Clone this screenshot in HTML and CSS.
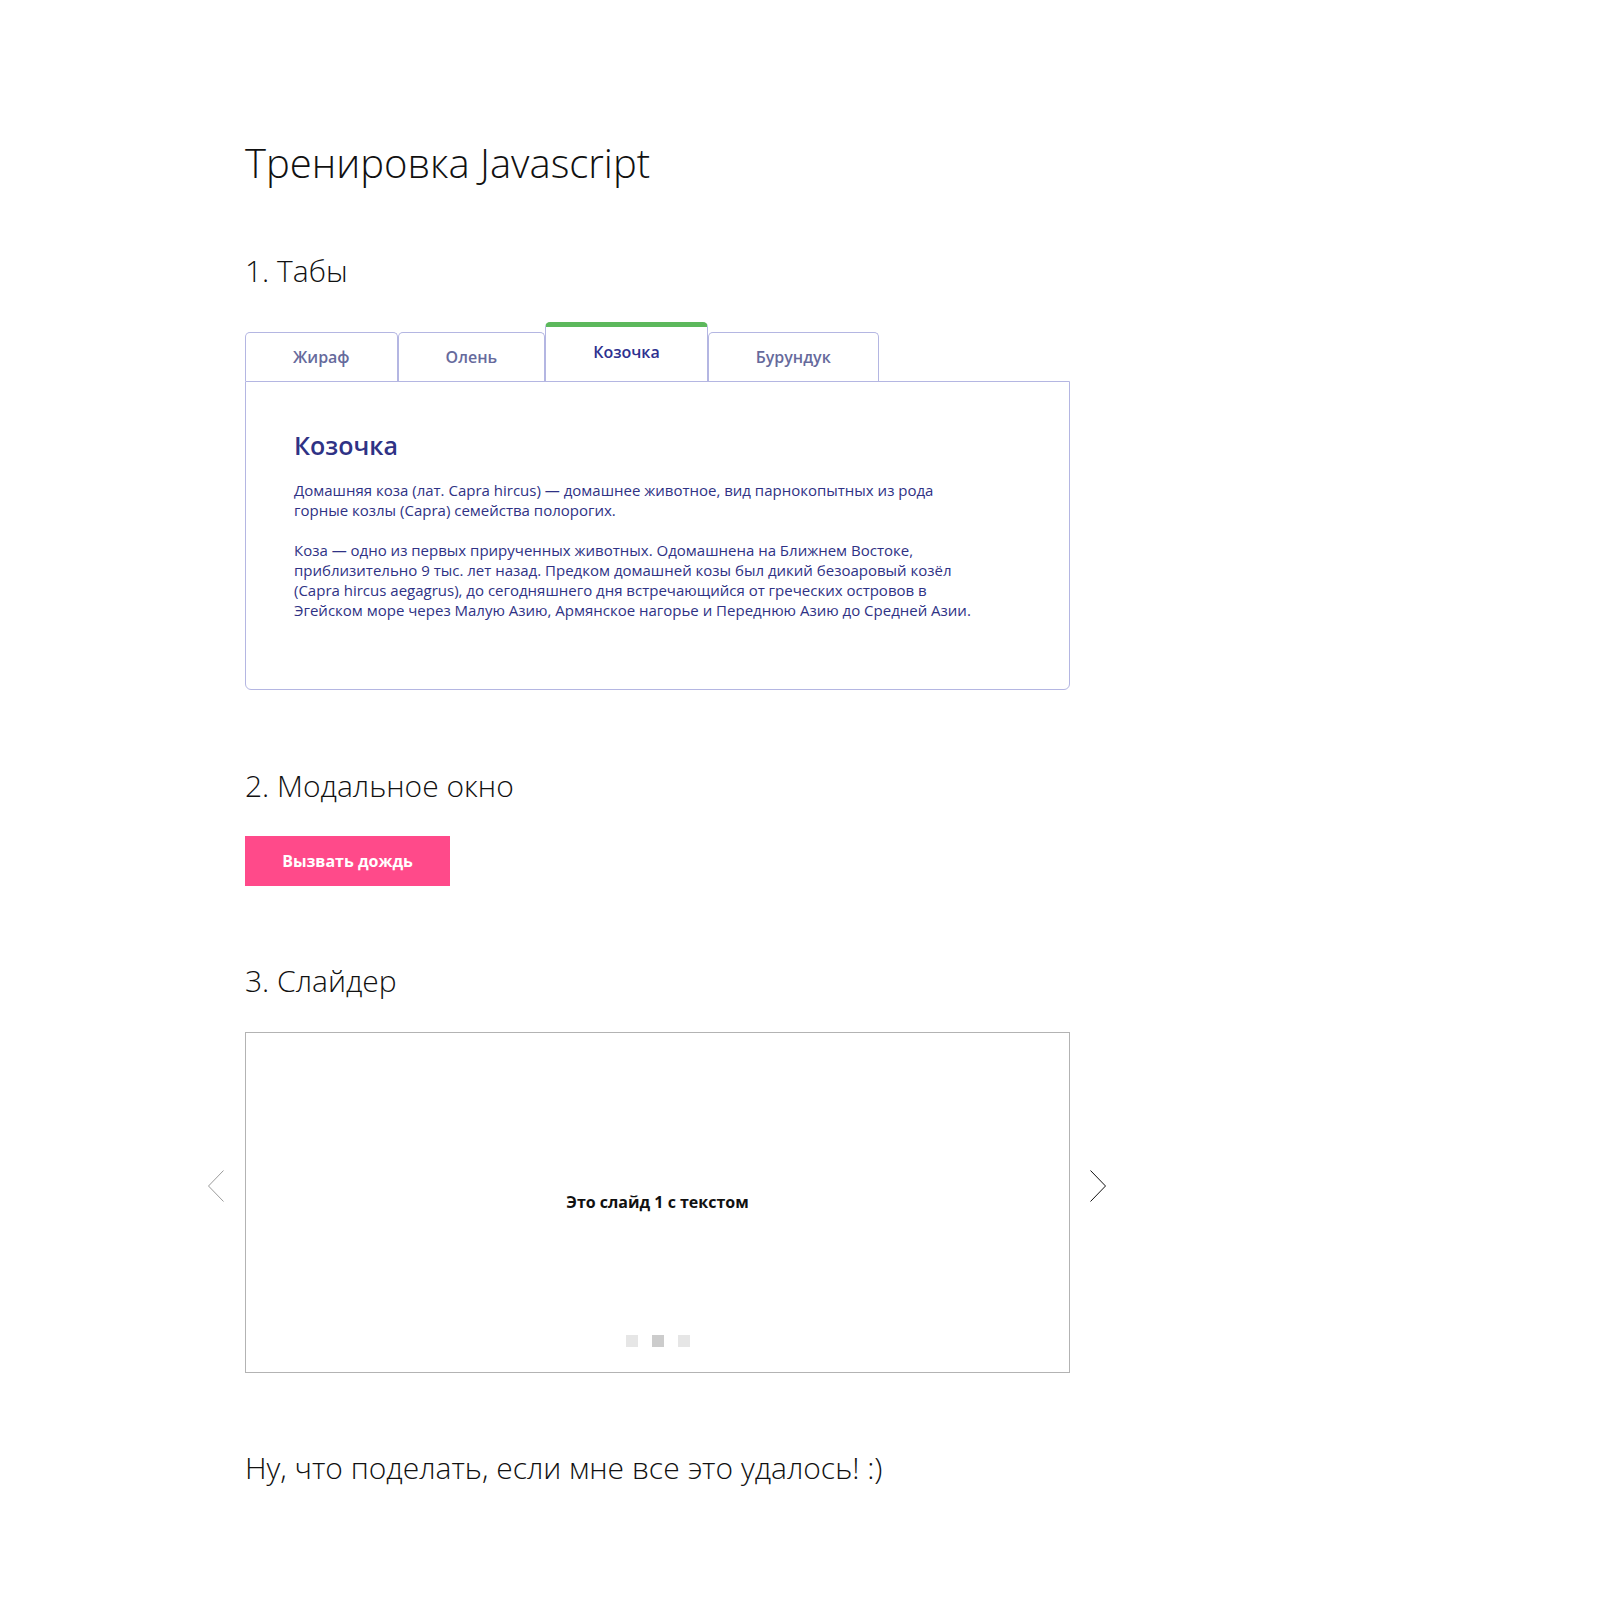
FILE: index.html
```html
<!DOCTYPE html>
<html lang="ru">
<head>
<meta charset="utf-8">
<title>Тренировка Javascript</title>
<link rel="stylesheet" href="styles.css">
</head>
<body>
<div class="page">
  <h1 class="title">Тренировка Javascript</h1>

  <section class="section section-tabs">
    <h2 class="section-title">1. Табы</h2>
    <div class="tabs">
      <div class="tab-list">
        <div class="tab">Жираф</div>
        <div class="tab">Олень</div>
        <div class="tab tab-active">Козочка</div>
        <div class="tab">Бурундук</div>
      </div>
      <div class="tab-panel">
        <h3 class="panel-title">Козочка</h3>
        <p class="panel-text">Домашняя коза (лат. Capra hircus) — домашнее животное, вид парнокопытных из рода горные козлы (Capra) семейства полорогих.</p>
        <p class="panel-text">Коза — одно из первых прирученных животных. Одомашнена на Ближнем Востоке, приблизительно 9 тыс. лет назад. Предком домашней козы был дикий безоаровый козёл (Capra hircus aegagrus), до сегодняшнего дня встречающийся от греческих островов в Эгейском море через Малую Азию, Армянское нагорье и Переднюю Азию до Средней Азии.</p>
      </div>
    </div>
  </section>

  <section class="section section-modal">
    <h2 class="section-title">2. Модальное окно</h2>
    <button class="btn-rain" type="button">Вызвать дождь</button>
  </section>

  <section class="section section-slider">
    <h2 class="section-title">3. Слайдер</h2>
    <div class="slider">
      <svg class="arrow arrow-prev" width="16" height="32" viewBox="0 0 16 32"><polyline points="15.5,0.5 0.5,16 15.5,31.5" fill="none" stroke="#9a9a9a" stroke-width="1"/></svg>
      <div class="slide">Это слайд 1 с текстом</div>
      <div class="dots">
        <span class="dot"></span>
        <span class="dot dot-active"></span>
        <span class="dot"></span>
      </div>
      <svg class="arrow arrow-next" width="16" height="32" viewBox="0 0 16 32"><polyline points="0.5,0.5 15.5,16 0.5,31.5" fill="none" stroke="#111" stroke-width="1"/></svg>
    </div>
  </section>

  <p class="final">Ну, что поделать, если мне все это удалось! :)</p>
</div>
</body>
</html>
```

FILE: styles.css
```css
html, body {
  margin: 0;
  padding: 0;
  background: #fff;
}

body {
  font-family: "Open Sans", "Noto Sans", sans-serif;
  color: #111;
}

.page {
  width: 825px;
  margin-left: 245px;
  padding: 136px 0 120px;
}

.title {
  margin: 0;
  font-size: 40px;
  line-height: 54px;
  font-weight: 300;
  color: #111;
}

.section-title {
  margin: 0;
  font-size: 30px;
  line-height: 41px;
  font-weight: 300;
  color: #111;
}

.section-tabs {
  margin-top: 60px;
}

.tabs {
  margin-top: 31px;
}

.tab-list {
  display: flex;
  align-items: flex-end;
}

.tab {
  box-sizing: border-box;
  height: 49px;
  padding: 0 47px;
  display: flex;
  align-items: center;
  justify-content: center;
  border: 1px solid #b4b6e2;
  border-bottom: none;
  border-radius: 5px 5px 0 0;
  background: #fff;
  font-size: 16px;
  font-weight: 600;
  color: #666a9c;
}

.tab-active {
  height: 59px;
  border-top: 5px solid #5cb85c;
  color: #2e3190;
  padding-bottom: 4px;
}

.tab-panel {
  border: 1px solid #b4b6e2;
  border-radius: 0 0 6px 6px;
  padding: 46px 48px 49px;
}

.panel-title {
  margin: 0 0 18px;
  font-size: 25px;
  line-height: 34px;
  font-weight: 600;
  color: #2f3285;
}

.panel-text {
  margin: 0 0 20px;
  max-width: 684px;
  font-size: 15px;
  line-height: 20px;
  color: #2f3285;
}

.section-modal {
  margin-top: 75px;
}

.btn-rain {
  display: block;
  margin-top: 30px;
  width: 205px;
  height: 50px;
  border: none;
  border-radius: 0;
  background: #ff4a8a;
  color: #fff;
  font-family: "Open Sans", "Noto Sans", sans-serif;
  font-size: 16px;
  font-weight: 700;
  cursor: pointer;
}

.section-slider {
  margin-top: 74px;
}

.slider {
  position: relative;
  margin-top: 31px;
  height: 341px;
  box-sizing: border-box;
  border: 1px solid #b3b3b3;
  display: flex;
  flex-direction: column;
  align-items: center;
}

.slide {
  flex: 1;
  display: flex;
  align-items: center;
  justify-content: center;
  font-size: 16px;
  font-weight: 700;
  color: #111;
  padding-top: 36px;
}

.dots {
  display: flex;
  gap: 14px;
  margin-bottom: 25px;
}

.dot {
  width: 12px;
  height: 12px;
  background: #e6e6e6;
}

.dot-active {
  background: #cccccc;
}

.arrow {
  position: absolute;
  top: 137px;
}

.arrow-prev {
  left: -38px;
}

.arrow-next {
  right: -37px;
}

.final {
  margin: 74px 0 0;
  font-size: 30px;
  line-height: 41px;
  font-weight: 300;
  color: #111;
}
```
